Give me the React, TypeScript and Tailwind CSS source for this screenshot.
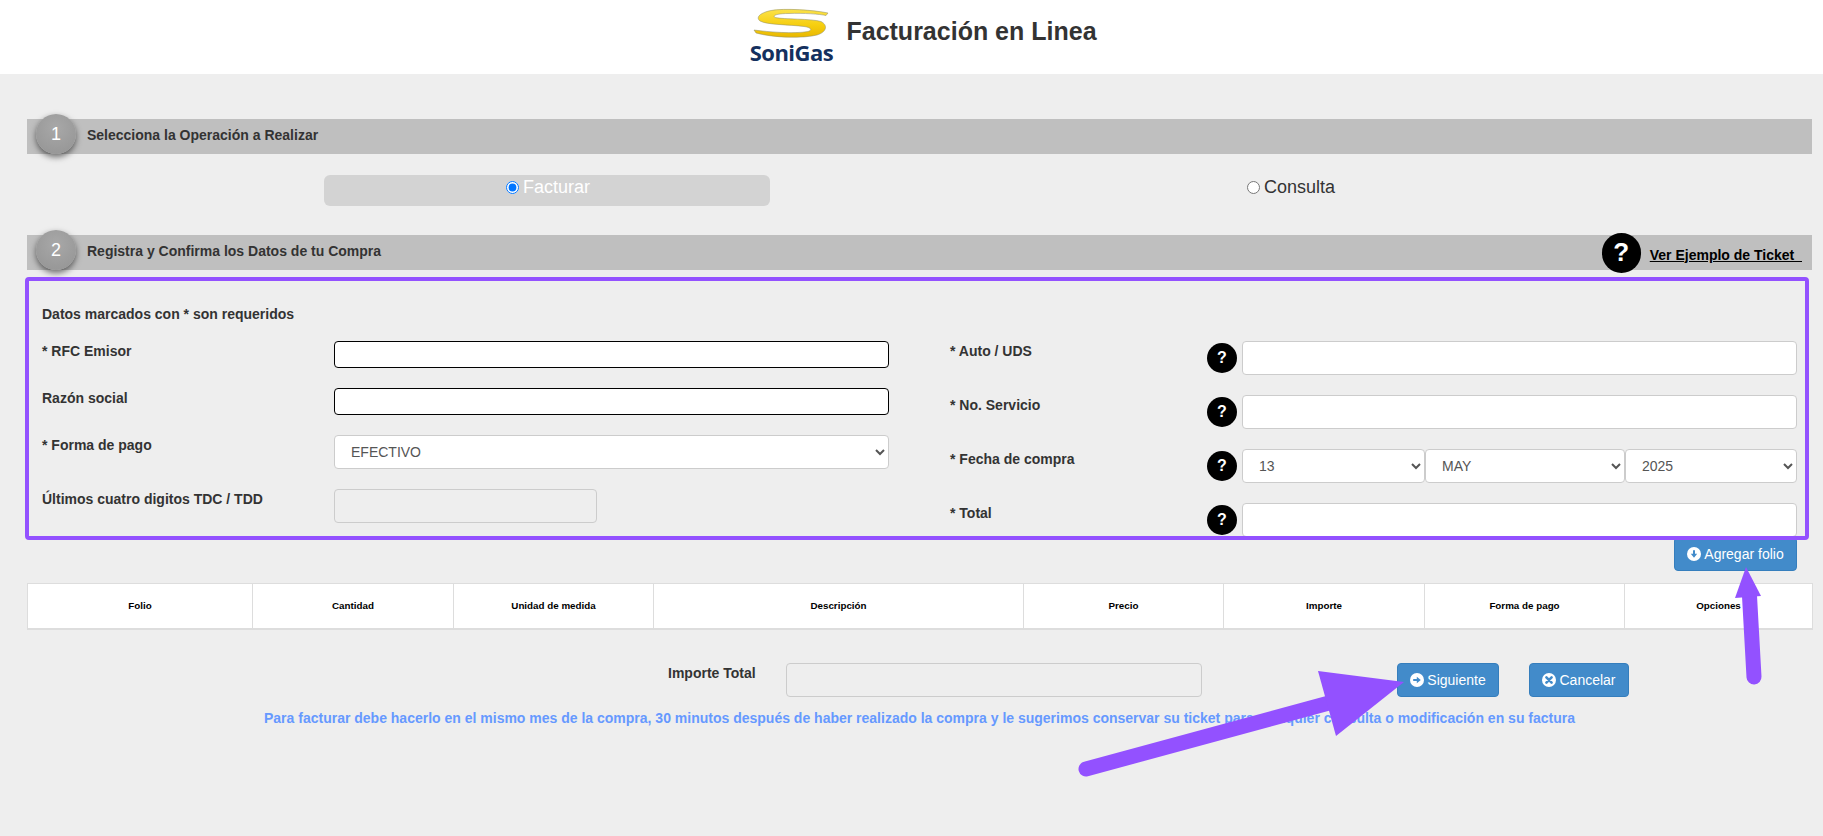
const columns = [
  { name: "Folio", width: "w-[225px]" },
  { name: "Cantidad", width: "w-[201px]" },
  { name: "Unidad de medida", width: "w-[200px]" },
  { name: "Descripción", width: "w-[370px]" },
  { name: "Precio", width: "w-[200px]" },
  { name: "Importe", width: "w-[201px]" },
  { name: "Forma de pago", width: "w-[200px]" },
  { name: "Opciones", width: "w-[188px]" },
];

const inputClass = "h-[34px] rounded border border-[#ccc] bg-white px-3 text-sm text-[#555]";

function Logo() {
  return (
    <div className="mt-[6px] flex h-[56px] w-[84px] flex-col items-center self-start">
      <svg viewBox="750 6 84 32" className="h-[32px] w-[84px] shrink-0">
        <defs>
          <linearGradient id="soni-yellow" x1="0" y1="0" x2="0" y2="1">
            <stop offset="0" stopColor="#fbe24a" />
            <stop offset="0.55" stopColor="#f6cf10" />
            <stop offset="1" stopColor="#e9b800" />
          </linearGradient>
        </defs>
        <path
          d="M829 13 C815 10 785 8 772 10.5 C762 12.5 756 17 761 21 C768 25 790 24.5 805 26.5 C812 27.5 814 30 809 31.5 C795 34 770 32 755 30 L757 33 C775 38 805 38.5 818 35 C828 32 829 25 822 21.5 C812 18.5 785 19.5 776 17.5 C773 15.5 778 13.5 790 13.5 C805 13 820 14 827 15.5 Z"
          fill="url(#soni-yellow)"
          stroke="#8b8b6a"
          strokeWidth="0.5"
        />
      </svg>
      <span className="mt-[3px] font-['Open_Sans',sans-serif] text-[22px] font-bold leading-[22px] tracking-[-0.5px] text-[#14305e]">
        SoniGas
      </span>
    </div>
  );
}

function StepBar({ step, title, children }: { step: number; title: string; children?: React.ReactNode }) {
  return (
    <div className="flex h-[35px] items-end bg-[#bfbfbf] pl-[9px]">
      <div className="flex h-[40px] w-[40px] shrink-0 items-center justify-center rounded-full bg-[radial-gradient(circle_at_50%_35%,#a8a8a8,#939393)] text-lg text-white shadow-[0_3px_6px_rgba(0,0,0,0.55)]">
        {step}
      </div>
      <span className="ml-[11px] self-center pb-[3px] text-sm font-bold text-[#333]">{title}</span>
      {children}
    </div>
  );
}

function HelpDot() {
  return (
    <div className="flex h-[30px] w-[30px] shrink-0 items-center justify-center rounded-full bg-black text-base font-bold text-white">
      ?
    </div>
  );
}

function Label({ children }: { children: React.ReactNode }) {
  return <label className="block text-sm font-bold leading-5 text-[#333]">{children}</label>;
}

function RightRow({ label, children }: { label: string; children: React.ReactNode }) {
  return (
    <div className="flex items-start">
      <div className="w-[257px] shrink-0">
        <Label>{label}</Label>
      </div>
      <div className="mt-[2px]">
        <HelpDot />
      </div>
      <div className="ml-[5px] flex min-w-0 flex-1">{children}</div>
    </div>
  );
}

function BtnIcon({ kind }: { kind: "right" | "down" | "close" }) {
  return (
    <svg viewBox="0 0 14 14" className="h-[14px] w-[14px] shrink-0">
      <circle cx="7" cy="7" r="7" fill="#fff" />
      {kind === "right" && <path d="M3.2 6h3.6V3.8L10.8 7l-4 3.2V8H3.2z" fill="#428bca" />}
      {kind === "down" && <path d="M6 3.2v3.6H3.8L7 10.8l3.2-4H8V3.2z" fill="#428bca" />}
      {kind === "close" && (
        <path d="M4.4 4.4L9.6 9.6M9.6 4.4L4.4 9.6" stroke="#428bca" strokeWidth="2.6" strokeLinecap="round" />
      )}
    </svg>
  );
}

function Button({ kind, label, width }: { kind: "right" | "down" | "close"; label: string; width: string }) {
  return (
    <button
      className={`flex h-[34px] shrink-0 items-center justify-center gap-[3px] rounded border border-[#357ebd] bg-[#428bca] text-sm text-white ${width}`}
    >
      <BtnIcon kind={kind} />
      {label}
    </button>
  );
}

export default function App() {
  return (
    <div className="relative h-[836px] w-full overflow-hidden bg-[#eee] font-['Liberation_Sans',Arial,sans-serif]">
      <header className="flex h-[74px] items-center justify-center gap-[13px] bg-white pl-[23px]">
        <Logo />
        <h1 className="mb-[10px] text-[25px] font-bold text-[#333]">Facturación en Linea</h1>
      </header>

      <main className="pl-[27px] pr-[11px] pt-[45px]">
        <StepBar step={1} title="Selecciona la Operación a Realizar" />

        <div className="mt-[21px] flex gap-[297px] pl-[297px]">
          <label className="flex h-[31px] w-[446px] items-start justify-center gap-1 rounded-md bg-[#d3d3d3] pl-[2px] text-lg leading-[25px] text-white">
            <input type="radio" name="operacion" defaultChecked className="mt-[6px]" />
            Facturar
          </label>
          <label className="flex h-[31px] w-[446px] items-start justify-center gap-1 pl-[2px] text-lg leading-[25px] text-[#333]">
            <input type="radio" name="operacion" className="mt-[6px]" />
            Consulta
          </label>
        </div>

        <div className="mt-[29px]">
          <StepBar step={2} title="Registra y Confirma los Datos de tu Compra">
            <div className="ml-auto flex items-center self-center pr-[10px]">
              <div className="flex h-[40px] w-[39px] items-center justify-center rounded-full bg-black text-[26px] font-bold text-white">
                ?
              </div>
              <a href="#" className="ml-[9px] mt-1 text-sm font-bold text-black underline">
                Ver Ejemplo de Ticket&nbsp;&nbsp;
              </a>
            </div>
          </StepBar>
        </div>

        <form className="px-[15px] pt-[34px]">
          <p className="text-sm font-bold leading-5 text-[#333]">Datos marcados con * son requeridos</p>
          <div className="mt-[17px] grid grid-cols-[847px_847px] items-start gap-x-[61px]">
            <div className="flex flex-col">
              <div className="flex items-start">
                <div className="w-[292px] shrink-0">
                  <Label>* RFC Emisor</Label>
                </div>
                <input className="h-[27px] flex-1 rounded border border-black bg-white" />
              </div>
              <div className="mt-5 flex items-start">
                <div className="w-[292px] shrink-0">
                  <Label>Razón social</Label>
                </div>
                <input className="h-[27px] flex-1 rounded border border-black bg-white" />
              </div>
              <div className="mt-5 flex items-start">
                <div className="w-[292px] shrink-0">
                  <Label>* Forma de pago</Label>
                </div>
                <select className={`flex-1 ${inputClass}`} defaultValue="EFECTIVO">
                  <option>EFECTIVO</option>
                  <option>TARJETA</option>
                </select>
              </div>
              <div className="mt-5 flex items-start">
                <div className="w-[292px] shrink-0">
                  <Label>Últimos cuatro digitos TDC / TDD</Label>
                </div>
                <input disabled className="h-[34px] w-[263px] rounded border border-[#ccc] bg-[#eee]" />
              </div>
            </div>

            <div className="flex flex-col gap-5">
              <RightRow label="* Auto / UDS">
                <input className={`w-full ${inputClass}`} />
              </RightRow>
              <RightRow label="* No. Servicio">
                <input className={`w-full ${inputClass}`} />
              </RightRow>
              <RightRow label="* Fecha de compra">
                <select className={`w-[183px] ${inputClass}`} defaultValue="13">
                  <option>13</option>
                </select>
                <select className={`w-[200px] ${inputClass}`} defaultValue="MAY">
                  <option>MAY</option>
                </select>
                <select className={`flex-1 ${inputClass}`} defaultValue="2025">
                  <option>2025</option>
                </select>
              </RightRow>
              <RightRow label="* Total">
                <input className={`w-full ${inputClass}`} />
              </RightRow>
              <div className="-mt-5 flex justify-end">
                <Button kind="down" label="Agregar folio" width="w-[123px]" />
              </div>
            </div>
          </div>
        </form>

        <table className="mt-3 w-full table-fixed border-collapse bg-white">
          <thead>
            <tr className="h-[45px] border border-b-2 border-[#ddd]">
              {columns.map((col) => (
                <th key={col.name} className={`border-x border-[#ddd] pt-[2px] text-center text-[9.8px] font-bold text-black ${col.width}`}>
                  {col.name}
                </th>
              ))}
            </tr>
          </thead>
        </table>

        <div className="mt-[33px] flex items-start pl-[641px]">
          <div className="w-[118px] shrink-0 text-sm font-bold leading-5 text-[#333]">Importe Total</div>
          <input disabled className="h-[34px] w-[416px] rounded border border-[#ccc] bg-[#eee]" />
          <div className="ml-[195px]">
            <Button kind="right" label="Siguiente" width="w-[102px]" />
          </div>
          <div className="ml-[30px]">
            <Button kind="close" label="Cancelar" width="w-[100px]" />
          </div>
        </div>

        <p className="mt-[11px] text-center text-sm font-bold leading-5 text-[#6699ff]">
          Para facturar debe hacerlo en el mismo mes de la compra, 30 minutos después de haber realizado la compra y le sugerimos conservar su ticket para cualquier consulta o modificación en su factura
        </p>
      </main>

      {/* purple annotations on top of the page */}
      <div className="pointer-events-none absolute left-[25px] top-[277px] h-[263px] w-[1784px] rounded-sm border-4 border-[#9351ff]" />
      <svg className="pointer-events-none absolute left-0 top-0 h-[836px] w-[1823px]" viewBox="0 0 1823 836">
        <path d="M1086 769L1340 700" stroke="#9351ff" strokeWidth="15" strokeLinecap="round" />
        <path d="M1318 671L1404 682L1336 736Z" fill="#9351ff" />
        <path d="M1754 677L1749.5 596" stroke="#9351ff" strokeWidth="15" strokeLinecap="round" />
        <path d="M1746 567L1735 598L1761 596Z" fill="#9351ff" />
      </svg>
    </div>
  );
}
